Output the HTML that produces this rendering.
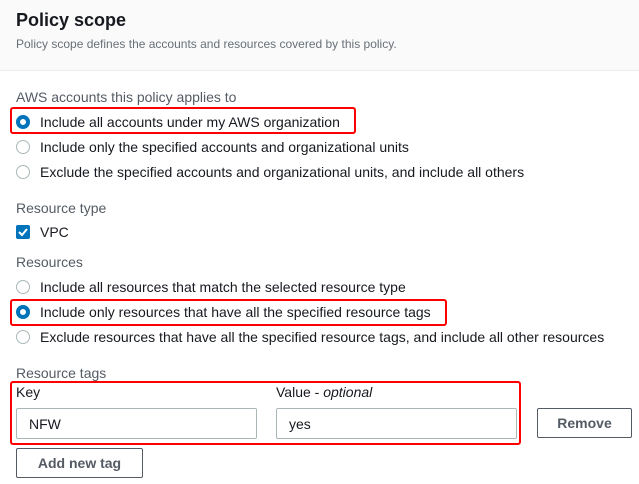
<!DOCTYPE html>
<html><head><style>
body{margin:0;width:639px;height:484px;background:#fff;font-family:"Liberation Sans",sans-serif;color:#16191f;position:relative;overflow:hidden}
.a{position:absolute;white-space:nowrap}
.hdr{position:absolute;left:0;top:0;width:639px;height:70px;background:#fafafa;border-bottom:1px solid #eaeded}
.t{font-size:14px;line-height:16px}
.lbl{font-size:14px;color:#545b64}
.r{position:absolute;width:12px;height:12px;border:1px solid #aab7b8;border-radius:50%;background:#fff;box-sizing:border-box;width:14px;height:14px}
.r.on{border:4px solid #0073bb}
.red{position:absolute;border:2px solid #f00;border-radius:3px;box-sizing:border-box}
.inp{position:absolute;border:1px solid #aab7b8;border-radius:2px;box-sizing:border-box;height:31px;font-size:14px;padding:7px 0 0 12px}
.btn{position:absolute;border:1px solid #545b64;border-radius:2px;box-sizing:border-box;font-weight:bold;font-size:14px;color:#545b64;text-align:center}
</style></head><body>
<div class="hdr"></div>
<div class="a" style="left:16px;top:10px;font-size:18px;font-weight:bold">Policy scope</div>
<div class="a" style="left:16px;top:37px;font-size:12px;color:#687078">Policy scope defines the accounts and resources covered by this policy.</div>

<div class="a lbl" style="left:16px;top:89px">AWS accounts this policy applies to</div>
<div class="red" style="left:10px;top:107px;width:346px;height:27px"></div>
<div class="r on" style="left:16px;top:115px"></div><div class="a t" style="left:40px;top:114px">Include all accounts under my AWS organization</div>
<div class="r" style="left:16px;top:140px"></div><div class="a t" style="left:40px;top:139px">Include only the specified accounts and organizational units</div>
<div class="r" style="left:16px;top:165px"></div><div class="a t" style="left:40px;top:164px">Exclude the specified accounts and organizational units, and include all others</div>

<div class="a lbl" style="left:16px;top:200px">Resource type</div>
<div class="a" style="left:16px;top:225px;width:14px;height:14px;background:#0073bb;border-radius:2px"><svg width="14" height="14"><path d="M3 7l3 3 5-6" stroke="#fff" stroke-width="2" fill="none"/></svg></div>
<div class="a t" style="left:40px;top:224px">VPC</div>

<div class="a lbl" style="left:16px;top:254px">Resources</div>
<div class="r" style="left:16px;top:280px"></div><div class="a t" style="left:40px;top:279px">Include all resources that match the selected resource type</div>
<div class="red" style="left:10px;top:299px;width:437px;height:27px"></div>
<div class="r on" style="left:16px;top:305px"></div><div class="a t" style="left:40px;top:304px">Include only resources that have all the specified resource tags</div>
<div class="r" style="left:16px;top:330px"></div><div class="a t" style="left:40px;top:329px">Exclude resources that have all the specified resource tags, and include all other resources</div>

<div class="a lbl" style="left:16px;top:365px">Resource tags</div>
<div class="red" style="left:10px;top:381px;width:511px;height:64px"></div>
<div class="a t" style="left:16px;top:384px">Key</div>
<div class="a t" style="left:276px;top:384px">Value - <i>optional</i></div>
<div class="inp" style="left:16px;top:408px;width:241px">NFW</div>
<div class="inp" style="left:276px;top:408px;width:241px">yes</div>
<div class="btn" style="left:537px;top:408px;width:95px;height:30px;line-height:28px">Remove</div>
<div class="btn" style="left:16px;top:448px;width:127px;height:30px;line-height:28px">Add new tag</div>
</body></html>
